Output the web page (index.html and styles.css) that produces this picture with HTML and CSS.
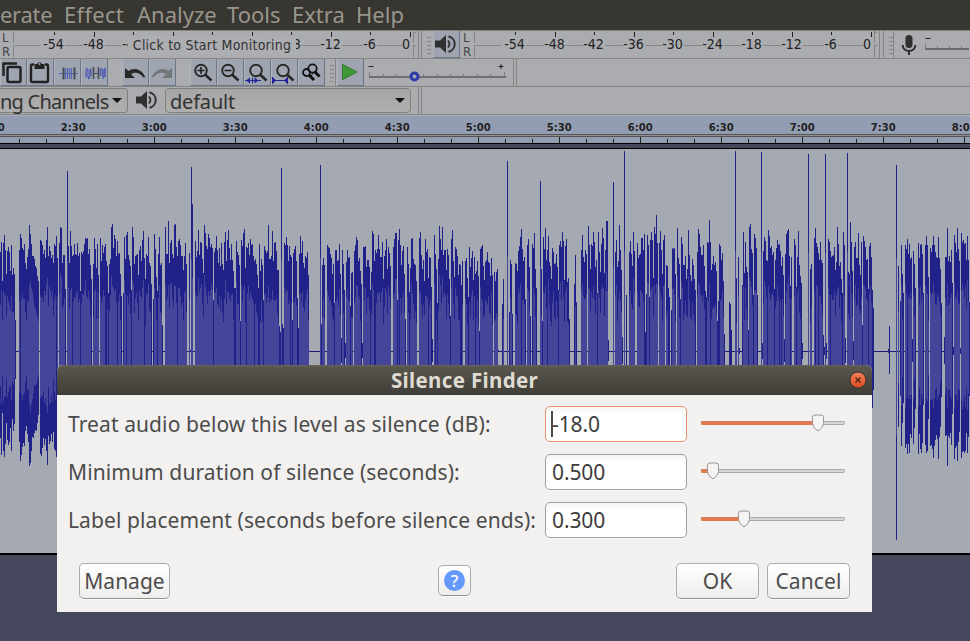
FILE: index.html
```html
<!DOCTYPE html>
<html lang="en">
<head>
<meta charset="utf-8">
<title>Silence Finder</title>
<link rel="stylesheet" href="styles.css">
</head>
<body>
<div class="app">
  <nav class="menubar">
    <span class="m-generate">erate</span><span class="m-effect">Effect</span><span class="m-analyze">Analyze</span><span class="m-tools">Tools</span><span class="m-extra">Extra</span><span class="m-help">Help</span>
  </nav>

  <div class="row row-meters">
    <div class="lr"><span>L</span><span>R</span></div>
    <div class="meter-wrap">
      <svg class="meter" width="405" height="28" data-first="41" data-covered="3 4 5"></svg>
      <div class="tooltip"><span>Click to Start Monitoring</span></div>
    </div>
    <i class="sep"></i><i class="sep sep-3"></i>
    <i class="grip"></i>
    <div class="tool speaker"><svg width="26" height="26" viewBox="0 0 26 26"><use href="#speaker"/></svg></div>
    <div class="lr lr-play"><span>L</span><span>R</span></div>
    <svg class="meter" width="405" height="28" data-first="41" data-covered=""></svg>
    <i class="sep sep-play"></i><i class="sep sep-3 wide"></i>
    <i class="grip grip-box"></i>
    <svg class="mic" width="30" height="28" viewBox="0 0 30 28"><rect x="11.5" y="4" width="7" height="13" rx="3.5" fill="#303030"/><path d="M8.8 14v1a6.2 5 0 0 0 12.4 0v-1M15 20v4" fill="none" stroke="#303030" stroke-width="2"/></svg>
    <svg class="rec-slider" width="46" height="28"><path d="M2.500 7.500h5" stroke="#222"/><path d="M2 18h44" stroke="#6a6d6b" stroke-width="2"/><path d="M2.500 13v4M14.500 15v2M26.500 15v2M38.500 15v2" stroke="#7b7d7c"/></svg>
  </div>

  <div class="row row-tools">
    <div class="tool"><svg width="26" height="26" viewBox="0 0 26 26"><path d="M4.500 17V4.500H18" fill="none" stroke="#222" stroke-width="2.500"/><rect x="8.500" y="8" width="13" height="15" rx="1.500" fill="none" stroke="#222" stroke-width="2.500"/></svg></div>
    <div class="tool"><svg width="26" height="26" viewBox="0 0 26 26"><path d="M8 5.500H6.500A1.500 1.500 0 0 0 5 7v14.500A1.500 1.500 0 0 0 6.500 23h14a1.500 1.500 0 0 0 1.500-1.500V7a1.500 1.500 0 0 0-1.500-1.500H19" fill="none" stroke="#222" stroke-width="2.400"/><path d="M8.500 5h2.500a2.700 2.700 0 0 1 5 0h2.500v5h-10z" fill="#222"/><circle cx="13.500" cy="5" r="1" fill="#a4a8b0"/></svg></div>
    <div class="tool"><svg width="26" height="26" viewBox="0 0 26 26"><path d="M6 14.500h19" stroke="#5962b0"/><path d="M12.500 9v11M14.500 9v11M16.500 9v11M18.500 9v11" stroke="#5663b5" stroke-width="1.200"/><path d="M10.500 8.500v12M21.500 8.500v12" stroke="#484b55" stroke-width="2"/></svg></div>
    <div class="tool"><svg width="26" height="26" viewBox="0 0 26 26"><path d="M14 14.500h5" stroke="#484b55"/><path d="M6 18.500V12q1-5 2 0v5q1 5 2 0v-6q.5-2 1 0v6M20.500 17v-5q1-5 2 0v5q1 5 1.500 0v-6q.8-3 1.500 0v7" fill="none" stroke="#5663b5" stroke-width="1.400"/><path d="M13.500 8v12M18.500 8v12" stroke="#484b55" stroke-width="1.700"/></svg></div>
    <i class="gap g-undo"></i>
    <div class="tool"><svg width="26" height="26" viewBox="0 0 26 26"><path d="M4 9v10h10l-4-3.700c4-3 9-1.500 12 3h2.500C21 9.500 12 8 7.500 12z" fill="#282828"/></svg></div>
    <div class="tool"><svg width="26" height="26" viewBox="0 0 26 26"><path d="M24 9v10H14l4-3.700c-4-3-9-1.500-12 3H3.500C7 9.500 16 8 20.500 12z" fill="#747779"/></svg></div>
    <i class="gap g-zoom"></i>
    <div class="tool"><svg width="26" height="26" viewBox="0 0 26 26"><use href="#lens" x="1"/><path d="M8.500 11.500h7M12 8v7" stroke="#222" stroke-width="1.600"/></svg></div>
    <div class="tool"><svg width="26" height="26" viewBox="0 0 26 26"><use href="#lens" x="1"/><path d="M8.500 11.500h7" stroke="#222" stroke-width="1.600"/></svg></div>
    <div class="tool"><svg width="26" height="26" viewBox="0 0 26 26"><use href="#lens" x="2"/><path d="M2 21.500h16M9.500 18.500v6" stroke="#23239a"/><path d="M7 18.500v6l-4-3zM11.500 18.500v6l4-3z" fill="#23239a"/></svg></div>
    <div class="tool"><svg width="26" height="26" viewBox="0 0 26 26"><use href="#lens" x="2"/><path d="M2.500 18v7M17.500 18v7M2 21.500h15" stroke="#23239a"/><path d="M3 18.500l3 3-3 3zM17 18.500l-3 3 3 3z" fill="#23239a"/></svg></div>
    <div class="tool"><svg width="26" height="26" viewBox="0 0 26 26"><circle cx="15.500" cy="9.500" r="4.200" fill="none" stroke="#111" stroke-width="1.800"/><circle cx="9.500" cy="13.500" r="3.500" fill="none" stroke="#111" stroke-width="1.800"/><path d="M12 16l5 5M17.500 12.500l5 5" stroke="#111" stroke-width="3"/><path d="M12.500 18.500l6-7" stroke="#111"/></svg></div>
    <i class="grip grip-box"></i>
    <div class="tool play"><svg width="26" height="26" viewBox="0 0 26 26"><path d="M6.500 5.500v15l14.500-7.500z" fill="#3f9838" stroke="#307a2d"/></svg></div>
    <svg class="speed" width="148" height="27"><g stroke="#222"><path d="M3.500 7.500h5M133.500 7.500h5M136 5v5"/></g><path d="M4 18h137" stroke="#6f7170" stroke-width="2"/><path d="M4.500 13v4M18.500 15v3M31.500 15v3M58.500 15v3M72.500 15v3M85.500 15v3M98.500 15v3M112.500 15v3M125.500 15v3M139.500 13v4" stroke="#7b7d7c"/><circle cx="49.500" cy="17.500" r="3.500" fill="#a3a6ad" stroke="#303aa9" stroke-width="3"/></svg>
    <i class="sep"></i><i class="sep sep-3"></i>
  </div>

  <div class="row row-device">
    <div class="combo combo-channels"><span>ng Channels</span><i class="arrow"></i></div>
    <svg class="device-speaker" width="26" height="26" viewBox="0 0 26 26"><use href="#speaker"/></svg>
    <div class="combo combo-default"><span>default</span><i class="arrow"></i></div>
    <i class="sep sep-device"></i><i class="sep sep-3"></i>
  </div>

  <svg class="ruler" id="ruler" width="970" height="34"></svg>
  <svg class="track" id="track" width="970" height="406"></svg>

  <section class="dialog">
    <header class="titlebar"><span>Silence Finder</span>
      <svg class="close" width="18" height="18" viewBox="0 0 18 18"><defs><linearGradient id="cl" x2="0" y2="1"><stop offset="0" stop-color="#f4805a"/><stop offset="1" stop-color="#dd4a1c"/></linearGradient></defs><circle cx="9" cy="9" r="8" fill="url(#cl)" stroke="#35332d"/><path d="M6.500 6.500l5 5M11.500 6.500l-5 5" stroke="#4c2414" stroke-width="1.300"/></svg>
    </header>
    <div class="form">
      <label><span>Treat audio below this level as silence (dB):</span></label><div class="field focus"><span>-18.0</span></div><svg class="slider" width="146" height="26" data-pos="117"></svg>
      <label><span>Minimum duration of silence (seconds):</span></label><div class="field"><span>0.500</span></div><svg class="slider" width="146" height="26" data-pos="12"></svg>
      <label><span>Label placement (seconds before silence ends):</span></label><div class="field"><span>0.300</span></div><svg class="slider" width="146" height="26" data-pos="43"></svg>
    </div>
    <footer class="actions">
      <button class="manage">Manage</button>
      <button class="help"><b>?</b></button>
      <button class="ok">OK</button>
      <button class="cancel">Cancel</button>
    </footer>
  </section>
</div>

<svg width="0" height="0" class="defs">
  <defs>
    <symbol id="speaker" viewBox="0 0 26 26"><path d="M3 9.500h5l6-5.500v18l-6-5.500H3z" fill="#303030"/><path d="M16 9.500q3 3.500 0 7" fill="none" stroke="#303030" stroke-width="1.800"/><path d="M16.500 5.200a8 8 0 0 1 0 15.600" fill="none" stroke="#303030" stroke-width="2"/></symbol>
    <symbol id="lens" viewBox="0 0 26 26" width="26" height="26"><circle cx="11" cy="11.500" r="5.800" fill="none" stroke="#282828" stroke-width="1.900"/><path d="M15 15.500l6.500 6" stroke="#282828" stroke-width="2.600"/></symbol>
  </defs>
</svg>
<script src="app.js"></script>
</body>
</html>
```
FILE: styles.css
```css
* { box-sizing: border-box; }
body { margin: 0; overflow: hidden; }
.app { position: relative; width: 970px; height: 641px; overflow: hidden; background: #45475c; font-family: "Noto Sans", sans-serif; }
svg { display: block; flex: none; }
.defs { position: absolute; }

.menubar { height: 31px; display: flex; background: #383631; border-bottom: 1px solid #85827c; color: #98958c; font-size: 22px; line-height: 28px; white-space: nowrap; }
.menubar span { flex: none; }
.m-generate { width: 64px; letter-spacing: -.3px; }
.m-effect { width: 73px; letter-spacing: .3px; }
.m-analyze { width: 90px; }
.m-tools { width: 65px; }
.m-extra { width: 64px; }

.row { display: flex; height: 28px; background: #abacb0; border-bottom: 1px solid #858583; overflow: hidden; }
.lr { width: 13px; padding-left: 2px; display: flex; flex-direction: column; font: 13px/14px "DejaVu Sans Condensed", "DejaVu Sans", sans-serif; color: #444; flex: none; }
.lr-play { width: 14px; padding-left: 3px; }
.meter-wrap { position: relative; flex: none; }
.meter text { font: 14px "DejaVu Sans Condensed", "DejaVu Sans", sans-serif; fill: #222; text-anchor: middle; }
.tooltip { position: absolute; left: 115px; top: 5px; width: 168px; height: 19px; background: #adaeb2; font: 14px/18px "DejaVu Sans Condensed", "DejaVu Sans", sans-serif; letter-spacing: .22px; color: #333; text-align: center; white-space: nowrap; }
.sep { width: 1px; background: #858583; flex: none; }
.sep-3 { margin-left: 2px; }
.wide { margin-left: 3px; }
.grip { width: 11px; flex: none; background: repeating-linear-gradient(#858583 0 1px, transparent 1px 4px) 5px 6px / 4px 17px no-repeat; }
.grip-box { border-right: 1px solid #858583; }
.row-meters .grip-box { width: 10px; }
.tool { width: 27px; height: 27px; flex: none; background: #9fa5b0; border-right: 1px solid #6b7789; border-bottom: 1px solid #6b7789; border-left: 1px solid #b0b3ba; }
.tool svg { margin-left: -2px; }
.speaker { width: 27px; }
.rec-slider { margin-left: -1px; }
.gap { flex: none; }
.g-undo { width: 14px; }
.g-zoom { width: 14px; }
.play { margin-left: 1px; width: 27px; }
.speed { margin-left: 1px; }

.row-device { height: 28px; }
.combo { height: 25px; margin-top: 1px; border: 1px solid #818078; border-radius: 0 4px 4px 0; background: linear-gradient(#a6a6a6, #afafaf); display: flex; align-items: center; color: #333; font-size: 20px; line-height: 23px; white-space: nowrap; flex: none; }
.combo span { flex: 1; padding-top: 1px; }
.combo-channels { width: 128px; border-left: 0; padding-right: 5px; letter-spacing: -.75px; }
.combo-default { width: 246px; border-radius: 4px; padding: 0 5px 0 4px; letter-spacing: -.2px; }
.arrow { width: 0; height: 0; flex: none; border: 5px solid transparent; border-top-color: #111; border-bottom: 0; }
.device-speaker { margin: 0 6px 0 5px; }
.sep-device { margin-left: 7px; }

.ruler text { font: bold 10px "DejaVu Sans", sans-serif; fill: #222; text-anchor: middle; }

.dialog { position: absolute; left: 57px; top: 365px; width: 815px; height: 247px; background: #f2f1f0; border-radius: 6px 6px 0 0; color: #4c4c4c; overflow: hidden; }
.titlebar { height: 30px; background: linear-gradient(#68655a 0, #59564d 2px, #3f3d37); display: flex; align-items: center; justify-content: center; color: #dfdbd2; font-weight: bold; font-size: 20.500px; letter-spacing: .35px; line-height: 28px; position: relative; }
.close { position: absolute; right: 5px; top: 6px; }
.form { display: grid; grid-template-columns: 477px 142px 146px; column-gap: 0; row-gap: 12px; padding: 11px 0 0 11px; grid-auto-rows: 36px; align-items: center; }
.form label { font-size: 21px; letter-spacing: .1px; white-space: nowrap; line-height: 34px; }
.form .slider { margin-left: 13px; margin-top: -3px; }
.field { height: 36px; border: 1px solid #a09f9c; border-radius: 5px; background: linear-gradient(#f4f4f4, #fff 8px); padding-left: 6px; font-size: 21px; line-height: 34px; letter-spacing: -.1px; color: #3c3c3c; box-shadow: 0 1px #fafafa; }
.focus { border-color: #e7906e; position: relative; }
.focus::before { content: ""; position: absolute; left: 5px; top: 4px; width: 2px; height: 26px; background: #4a4a4a; }
.actions { display: flex; padding: 24px 22px 0; align-items: flex-start; }
.actions button { height: 36px; margin-top: 1px; padding: 0; border: 1px solid #adaca8; border-bottom-color: #918f8a; border-radius: 5px; background: linear-gradient(#fff, #ededec); color: #4c4c4c; font: 21px/32px "Noto Sans", sans-serif; box-shadow: 0 1px #fafafa; }
.manage { width: 91px; }
.actions .help { width: 33px; height: 31px; margin: 3px 0 0 268px; display: flex; align-items: center; justify-content: center; }
.help b { width: 21px; height: 21px; border-radius: 50%; background: #6598fb; color: #fff; font: 500 17px/21px "Noto Sans", sans-serif; }
.ok { width: 83px; margin-left: 205px; }
.cancel { width: 83px; margin-left: 8px; letter-spacing: .1px; }
```
FILE: app.js
```js
const attr = (x, y, h) => `M${x + 0.5} ${y}v${h}`;

// Level meter scales
document.querySelectorAll('.meter').forEach(svg => {
  const first = +svg.dataset.first;
  const covered = svg.dataset.covered.split(' ').filter(Boolean).map(Number);
  let out = '<path d="M.5 0v12M.5 14.500v12M400.500 0v12M400.500 14.500v12M400 1.500h3M400 14.500h3M1 14.500h26" fill="none" stroke="#858583"/>';
  for (let i = 0; i < 10; i++) {
    const x = Math.round(first + i * 39.56);
    const label = i === 9 ? '0' : String(-54 + i * 6);
    const half = label.length === 3 ? 11 : label.length === 2 ? 7 : 4;
    const lx = label === '0' ? x - 4 : x - 0.5;
    out += `<path d="${attr(x, 1, i % 2 || i === 9 ? 5 : 3)}" stroke="#222"/>`;
    if (i < 9) {
      const end = Math.round(first + (i + 1) * 39.56) - (i < 7 ? 11 : i === 7 ? 7 : 8);
      out += `<path d="M${x + half} 14.500H${end}" stroke="#858583"/>`;
    }
    if (!covered.includes(i)) out += `<text x="${lx}" y="18">${label}</text>`;
  }
  svg.innerHTML = out;
});

// Timeline
let r = '<rect width="970" height="34" fill="#45475c"/><rect width="970" height="19" fill="#939db1"/><rect width="970" height="1" fill="#a8afbb"/><rect y="19" width="970" height="3" fill="#91908e"/><path d="M0 19.500h970M0 21.500h970" stroke="#555"/><rect y="22" width="970" height="6" fill="#939db1"/><path d="M0 28.500h970M0 33.500h970" stroke="#000"/>';
for (let i = -1; i < 12; i++) {
  const at = 73.3 + i * 80.93, x = Math.round(at), s = 150 + i * 30;
  r += `<text x="${x + 0.3}" y="16">${Math.floor(s / 60)}:${s % 60 ? '30' : '00'}</text>`;
  r += `<path d="${attr(x, 22, 6)}${attr(Math.round(at + 27), 24, 4)}${attr(Math.round(at + 54), 24, 4)}" stroke="#222"/>`;
}
document.getElementById('ruler').innerHTML = r;

// Waveform: each line is a start column followed by the peak of every column
const peaks = `
0 252 242 281 243 235 250 274 251 247 252 271 245 275 268 274 320
19 250 234 238 248 250 244 263 269 257 249 225 234 244 256 256 259 266 268 276 281
40 240 241 245 254 250 258 240 227 256 246 251 258 255 263 244 246 236 258
59 243 227 228 263 255 255 289
67 171 246 263 231 246 256 255 244 254 255 243 256 253 291 252 254 251 244 238 239 238 254 249 265 279
93 264 238 249 268 244 275
100 238 261 245 253 247 244 261 266 293 264 259 227 224 248 235 239 256 241 254 253 274 296
123 293 237 259 235 232 255 260 266 290 227 237 264 256 255 254 275 250 246 261 240 231 258 279 254 256 237 263 266 284
153 299 234 249 277 291 254 237 265 263 325
165 227 254 254 221 263 243 240 254 258 225 224 247 256 241 239 245 256 256 270 256 243 264
189 253 350 167 204
195 241 257 251 230 255 242 243 259 273 225 233 246 249 234 238 247 244 248 300 252 248 236 250 263 248 266 243 264 270 242 232 261 240 230 248 260 244 260 271 288
235 288 241 252 255 265 321 240 246 233 229 268 247 248 243 255 239 245 244 256 261 259 264 275 288 244 271 259 265 300 246 250 253 251 225 259 259 256 231 261 243 242 251 270 270 326 332
281 168 324 328 243 245 237 245 261 246 255 257 320 253 249 246 261 298 328 254 236 253 241 263 268 256 258 252 275
320 165 324 265 258 265
327 245 247 248 254 258 274 264 303 250 250 261 260 244 274 338 250 264 290 343 262 250 258 257 306 273 272
354 251 245 237 240 261 258 271 284 343 247 247 246 267 260 260 267 290 272 231 234 261 250 253 249 235 249 257 257 242 279 256 250 239 269 247 253 266
393 247 239 233 233 300 240 229 245 265 251 246 274 319
407 247 264 292 268 239 238 259 264 265 281
419 238 232 255 269 260 281 239 252 249 278 257 258 287 339
434 235 254 269 303 259 226 239 250 227 255 250 250 270 249 255 279 316 239 230 261 277 247 249 256 275 264 265 285 261
465 261 258 278 297 247 267 258 251 280 257 274 271 261 276 331 249 247 245 266 280 262 260 252 262 263 276 258 275
494 272 281 272 269 350
502 304 279
507 161
509 312 260 264 314
515 263 264 271 251 246 237 229 249 261 257 299
527 245 239 267 316
532 244 248 233 269 288
540 181 269 321 237 249 228 260 250 236 262 266 279 248 252 264 263 254 267 290 245 241 247 232 241 280 246 239 282 278 319
574 284 255 302
581 250 235 257 262 250 254
588 226 245 269 244 246 232 242 267 260 293 232 252 272 244 228 238 273 250 221 221 340
613 182
615 252 240 267 261 225 250 270 337
624 151
626 295
629 252 241 254 266 232 251
637 243 258 255 254 238 238 250 234 332 294 235 245 297 240 232 240 278 227 234 215 243
659 243 231 250 274 240 235
666 265 266 288 297
671 310 248 249 248 274
677 228 258 264 299 237 244 265 265 256 279 269 230 255 275 281 259 265 279 290
697 252 229 234 247 255 255 245 266 291 297 242 243 220 242 270 264 256 265 262 271 321 301 244 246 260 253 281 334
729 302 304 330
735 151 278
738 257 348
742 285 232 273 242 267 272 330 227 224 249 253 295 234 238 248 295
761 152 343 251 237 241 260 261 230 236 248 246 255 252 289 260 248 240 245 244 251 266 257 275 339 254 234 231 229 256 286 257
794 239 245 287 257 231 265 276 283 343
808 154
810 269 264
814 238 228 243 247 253 260 242 260 263 335 347 154 343
828 239 242 251 257 256 255 247 270 262 227 244 266 262 279 293 232 245 338
847 153 272 274 222 242 271 341 247 242 258 258 233 265 275 242 325 236 241 247 260 259 289 246 243 257 290 308
888 349 326
896 165
898 266
900 301 245 274 293
905 245 249 239 254 244 259 257 339 251 264 288
918 243 258 245 244 254 293
925 245 236 245 277
930 248 252 245 236 245 252 257 258 237 258 269 303
944 337 257 257 228 261 256 262 250 283 347 235 243 252 228 249 261 348 233 242 240 244 243 260 236 260 302`;
const top0 = 149, mid = 351;
const hash = n => { const v = Math.sin(n * 12.9898) * 43758.5453; return v - Math.floor(v); };
let outer = '', inner = '';
peaks.trim().split('\n').forEach(line => {
  const [start, ...vals] = line.split(' ').map(Number);
  vals.forEach((top, i) => {
    const x = start + i, up = mid - top;
    const down = x === 896 ? 189 : up * (0.88 + hash(x) * 0.08);
    outer += attr(x, top - top0, Math.round(up + down));
    if (top > 282 || (hash(x + 7) < 0.06 && up < 130)) return;
    const k = up > 140 ? 0.5 : 0.46 + hash(x * 3) * 0.17 - (top > 262 ? 0.12 : 0);
    inner += attr(x, Math.round(mid - up * k) - top0, Math.round(up * k + down * (k - 0.05)));
  });
});
document.getElementById('track').innerHTML =
  `<rect width="970" height="404" fill="#a4a9b2"/><rect y="404" width="970" height="2" fill="#000"/><path d="M0 202.500h970" stroke="#1c1c70"/><path d="${outer}" stroke="#21218a"/><path d="${inner}" stroke="#45459a"/>`;

// Dialog sliders
document.querySelectorAll('.slider').forEach(svg => {
  const p = +svg.dataset.pos + 1;
  svg.innerHTML = `<rect x="1.500" y="11.500" width="143" height="3" rx="1.500" fill="#d8d7d6" stroke="#aaa9a7"/><rect x="1" y="11" width="${p}" height="4" rx="1" fill="#e07b51"/><path d="M${p - 5.5} 7.500q0-2.500 2.500-2.500h6q2.500 0 2.500 2.500v6q0 4-5.500 7.500q-5.500-3.500-5.500-7.500z" fill="#f5f4f3" stroke="#979592"/>`;
});
```
